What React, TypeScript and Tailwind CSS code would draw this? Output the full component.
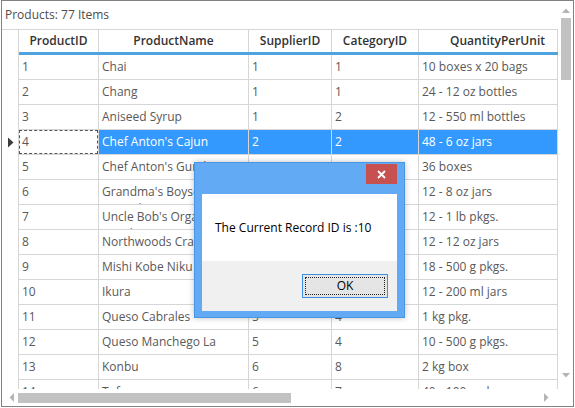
import React from "react";

type Row = [string, string, string, string, string];

const rows: Row[] = [
  ["1", "Chai", "1", "1", "10 boxes x 20 bags"],
  ["2", "Chang", "1", "1", "24 - 12 oz bottles"],
  ["3", "Aniseed Syrup", "1", "2", "12 - 550 ml bottles"],
  ["4", "Chef Anton's Cajun Seasoning", "2", "2", "48 - 6 oz jars"],
  ["5", "Chef Anton's Gumbo Mix", "2", "2", "36 boxes"],
  ["6", "Grandma's Boysenberry Spread", "3", "2", "12 - 8 oz jars"],
  ["7", "Uncle Bob's Organic Dried Pears", "3", "7", "12 - 1 lb pkgs."],
  ["8", "Northwoods Cranberry Sauce", "3", "2", "12 - 12 oz jars"],
  ["9", "Mishi Kobe Niku", "4", "6", "18 - 500 g pkgs."],
  ["10", "Ikura", "4", "8", "12 - 200 ml jars"],
  ["11", "Queso Cabrales", "5", "4", "1 kg pkg."],
  ["12", "Queso Manchego La Pastora", "5", "4", "10 - 500 g pkgs."],
  ["13", "Konbu", "6", "8", "2 kg box"],
  ["14", "Tofu", "6", "7", "40 - 100 g pkgs."],
];

const widths = ["w-[80px]", "w-[150px]", "w-[83px]", "w-[87px]", "w-[139px]"];

function HeaderCell({ w, label, right }: { w: string; label: string; right?: boolean }) {
  return (
    <div
      className={`${w} shrink-0 h-[22px] border-r border-[#d6d6d6] flex items-center ${
        right ? "justify-end pr-[12px]" : "justify-center"
      } font-semibold text-[#333333]`}
    >
      {label}
    </div>
  );
}

function DataRow({ r, selected }: { r: Row; selected: boolean }) {
  return (
    <div className="flex h-[25px] shrink-0">
      <div className="w-[17px] shrink-0 border-r border-[#d6d6d6] flex items-center justify-center">
        {selected && (
          <svg width="7" height="11" viewBox="0 0 7 11">
            <path d="M1 0.5 L6.5 5.5 L1 10.5 Z" fill="#3c3c3c" />
          </svg>
        )}
      </div>
      {r.map((v, i) => {
        const sel = selected && i > 0;
        return (
          <div
            key={i}
            className={`${widths[i]} shrink-0 h-[25px] border-r border-b border-[#d6d6d6] overflow-hidden ${
              sel ? "bg-[#3399ff] text-white" : "text-[#595959]"
            }`}
          >
            {selected && i === 0 ? (
              <div className="h-full border border-dashed border-[#555555] px-[2px] pt-[3px] leading-[16px]">
                {v}
              </div>
            ) : (
              <div className="px-[3px] pt-[3px] leading-[17px] break-words">{v}</div>
            )}
          </div>
        );
      })}
    </div>
  );
}

export default function App() {
  return (
    <div className="w-[575px] h-[408px] bg-white font-['Open_Sans',sans-serif] text-[12px]">
      <div className="relative ml-[1px] w-[573px] h-[407px] border border-[#828282] flex flex-col overflow-hidden">
        <div className="flex h-[388px] shrink-0">
          <div className="w-[556px] shrink-0 flex flex-col overflow-hidden">
            <div className="h-[28px] shrink-0 flex items-center pl-[3px] text-[#4d4d4d]">Products: 77 Items</div>
            <div className="flex border-t border-[#d6d6d6] shrink-0">
              <div className="w-[17px] shrink-0 h-[25px] border-r border-[#d6d6d6]" />
              <div className="flex border-b-[3px] border-[#4fa3de]">
                <HeaderCell w={widths[0]} label="ProductID" />
                <HeaderCell w={widths[1]} label="ProductName" />
                <HeaderCell w={widths[2]} label="SupplierID" />
                <HeaderCell w={widths[3]} label="CategoryID" />
                <HeaderCell w={widths[4]} label="QuantityPerUnit" right />
              </div>
            </div>
            <div className="flex flex-col overflow-hidden">
              {rows.map((r, i) => (
                <DataRow key={i} r={r} selected={i === 3} />
              ))}
            </div>
          </div>
          <div className="w-[15px] shrink-0 flex flex-col items-center">
            <div className="h-[16px] flex items-center justify-center pt-[2px]">
              <svg width="8" height="5" viewBox="0 0 8 5">
                <path d="M0 5 L4 0.5 L8 5 Z" fill="#b5b5b5" />
              </svg>
            </div>
            <div className="w-[10px] h-[62px] bg-[#c2c2c2] mt-[1px]" />
            <div className="flex-1" />
            <div className="h-[18px] flex items-start justify-center pt-[2px]">
              <svg width="8" height="5" viewBox="0 0 8 5">
                <path d="M0 0 L4 4.5 L8 0 Z" fill="#b5b5b5" />
              </svg>
            </div>
          </div>
        </div>
        <div className="flex h-[17px] shrink-0">
          <div className="w-[556px] shrink-0 flex items-center">
            <div className="w-[16px] flex items-center justify-center pl-[2px]">
              <svg width="5" height="9" viewBox="0 0 5 9">
                <path d="M5 0 L0.5 4.5 L5 9 Z" fill="#b5b5b5" />
              </svg>
            </div>
            <div className="w-[273px] h-[10px] bg-[#c2c2c2]" />
            <div className="flex-1" />
            <div className="w-[16px] flex items-center justify-center pr-[8px]">
              <svg width="5" height="9" viewBox="0 0 5 9">
                <path d="M0 0 L4.5 4.5 L0 9 Z" fill="#b5b5b5" />
              </svg>
            </div>
          </div>
          <div className="w-[15px] shrink-0" />
        </div>

        <div className="absolute left-[192px] top-[161px] w-[211px] h-[156px] bg-[#62aaf3] border border-[#4a96e6] shadow-[0_0_6px_rgba(0,0,0,0.25)] flex flex-col px-[7px] pb-[6px]">
          <div className="h-[31px] shrink-0 flex justify-end items-start pt-[1px]">
            <div className="w-[31px] h-[20px] bg-[#c75050] flex items-center justify-center">
              <svg width="9" height="9" viewBox="0 0 9 9">
                <path d="M1 1 L8 8 M8 1 L1 8" stroke="#ffffff" strokeWidth="1.8" />
              </svg>
            </div>
          </div>
          <div className="h-[67px] shrink-0 bg-white flex items-center pl-[13px] text-black">
            The Current Record ID is :10
          </div>
          <div className="flex-1 bg-[#f0f0f0] flex items-center justify-end pr-[9px]">
            <div className="w-[86px] h-[24px] border border-[#3c8fe0] bg-[#e5e5e5] p-[2px]">
              <div className="w-full h-full border border-dotted border-[#222222] flex items-center justify-center text-black">
                OK
              </div>
            </div>
          </div>
        </div>
      </div>
    </div>
  );
}
